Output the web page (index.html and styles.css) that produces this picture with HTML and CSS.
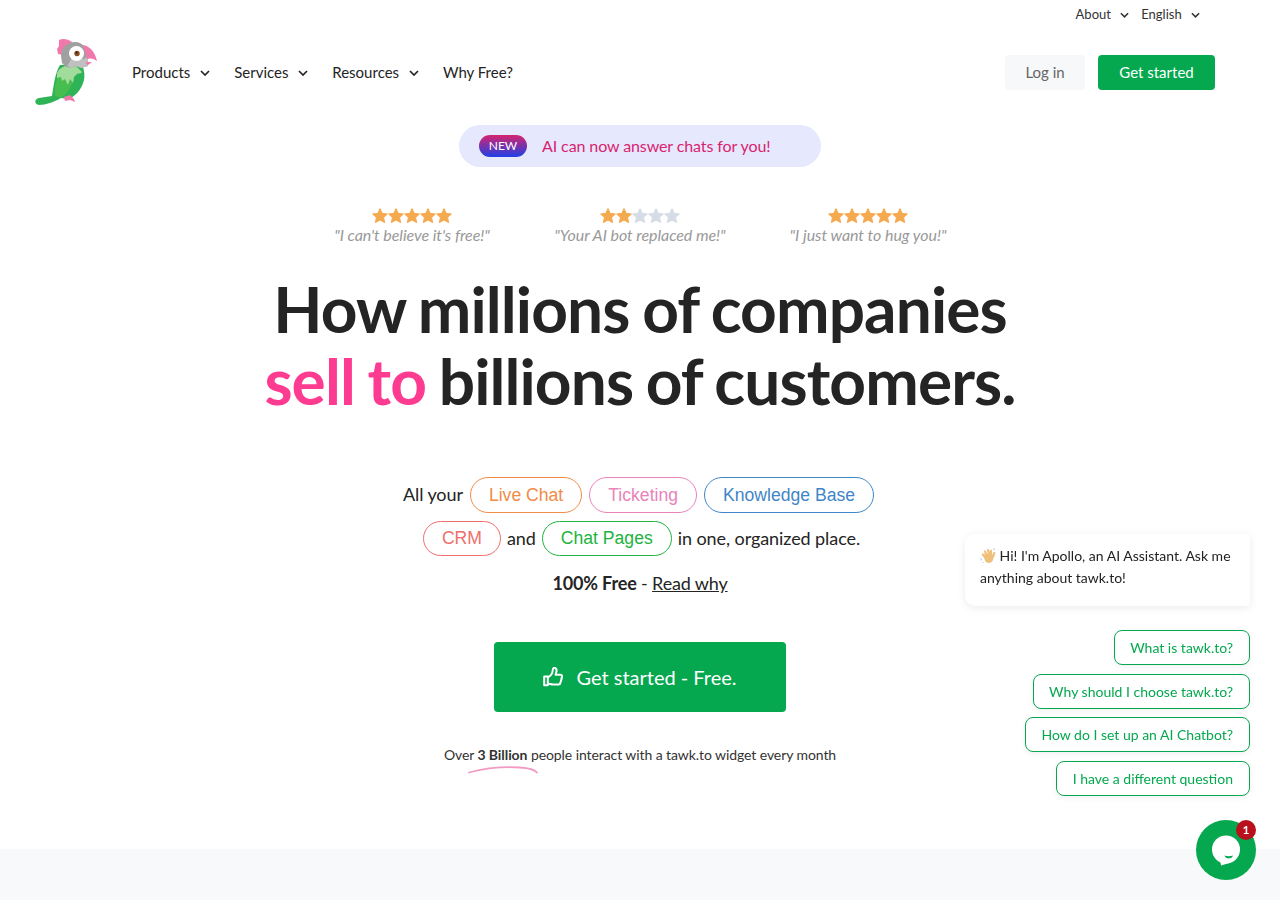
FILE: index.html
```html
<!doctype html>
<html>
<head>
    <meta charset="utf-8">
    <title>tawk.to</title>
    <link rel="stylesheet" href="styles.css">
</head>
<body>
    <svg class="defs" width="0" height="0">
        <symbol id="star" viewBox="0 0 16 16">
            <path d="M8 .6l2.2 4.7 5.2.7-3.8 3.5 1 5.1L8 12.1l-4.6 2.5 1-5.1L.6 6l5.2-.7z" stroke="currentColor" stroke-width="1" stroke-linejoin="round"/>
        </symbol>
        <symbol id="chevron" viewBox="0 0 10 6">
            <path d="M1 1l4 4 4-4" fill="none" stroke="currentColor" stroke-width="1.7"/>
        </symbol>
    </svg>

    <div class="topbar">
        <a href="#">About <svg class="chev-small"><use href="#chevron"/></svg></a>
        <a href="#">English <svg class="chev-small"><use href="#chevron"/></svg></a>
    </div>

    <header class="header">
        <svg class="logo" viewBox="9 8 64 68">
            <path d="M14 68L27 66C29 54 30 43 35 35L56 34C59 38 60 44 59 50 57 59 50 67 43 69L36 68C29 72 21 75 14 75 9 74 9 69 14 68Z" fill="#2eb356"/>
            <path d="M34 42C31 50 29 58 30 66L36 68C43 63 48 56 48 47Z" fill="#45bd4f"/>
            <path d="M39 67l6-2 4 4 1 3-5-2-5 1z" fill="#f178ab"/>
            <path d="M32 43C35 36 44 34 51 36L57 42C55 45 53 42 51 45L49 47 48 53 45 49 43 55 40 49 37 51 36 47 32 48Z" fill="#a1dc9c"/>
            <path d="M34 10C38 8 43 9 47 12L44 22 38 25 33 24 32 19 34 16Z" fill="#f178ab"/>
            <path d="M36 26C36 17 43 12 50 12 58 12 63 19 63 27L63 36 56 38 51 36 46 38 41 37 37 33Z" fill="#a0a0a0"/>
            <path d="M63 26L63 36 56 38 51 36 46 38 42 36C45 33 45 27 50 28 54 30 60 30 63 26Z" fill="#c0c0c0"/>
            <path d="M58 15C65 16 70 22 72 31 68 28 65 28 62 29Z" fill="#f178ab"/>
            <path d="M61 32L67 32 63 35 61 34Z" fill="#f178ab"/>
            <circle cx="51.500" cy="23.500" r="7.500" fill="#fff"/>
            <circle cx="52" cy="23.500" r="2.700" fill="#8a4a1c"/>
            <circle cx="51.500" cy="22.500" r=".9" fill="#222"/>
        </svg>
        <nav class="nav">
            <a href="#">Products <svg class="chev"><use href="#chevron"/></svg></a>
            <a href="#">Services <svg class="chev"><use href="#chevron"/></svg></a>
            <a href="#">Resources <svg class="chev"><use href="#chevron"/></svg></a>
            <a href="#">Why Free?</a>
        </nav>
        <div class="auth">
            <a class="btn btn-login" href="#">Log in</a>
            <a class="btn btn-start" href="#">Get started</a>
        </div>
    </header>

    <main class="hero">
        <a class="banner" href="#"><span class="new">NEW</span> <span class="banner-text">AI can now answer chats for you!</span></a>

        <div class="reviews">
            <div class="review">
                <div class="stars">
                    <svg><use href="#star"/></svg><svg><use href="#star"/></svg><svg><use href="#star"/></svg><svg><use href="#star"/></svg><svg><use href="#star"/></svg>
                </div>
                <p>"I can't believe it's free!"</p>
            </div>
            <div class="review">
                <div class="stars">
                    <svg><use href="#star"/></svg><svg><use href="#star"/></svg><svg class="off"><use href="#star"/></svg><svg class="off"><use href="#star"/></svg><svg class="off"><use href="#star"/></svg>
                </div>
                <p>"Your AI bot replaced me!"</p>
            </div>
            <div class="review">
                <div class="stars">
                    <svg><use href="#star"/></svg><svg><use href="#star"/></svg><svg><use href="#star"/></svg><svg><use href="#star"/></svg><svg><use href="#star"/></svg>
                </div>
                <p>"I just want to hug you!"</p>
            </div>
        </div>

        <h1>How millions of companies<br><span class="pink">sell to</span> billions of customers.</h1>

        <div class="pill-row row-one">
            <span>All your</span>
            <a class="pill orange" href="#">Live Chat</a>
            <a class="pill rose" href="#">Ticketing</a>
            <a class="pill blue" href="#">Knowledge Base</a>
        </div>
        <div class="pill-row row-two">
            <a class="pill red" href="#">CRM</a>
            <span>and</span>
            <a class="pill green" href="#">Chat Pages</a>
            <span>in one, organized place.</span>
        </div>
        <p class="free"><b>100% Free</b> - <a href="#">Read why</a></p>

        <a class="cta" href="#">
            <svg class="thumb" viewBox="0 0 20 20">
                <path d="M1.200 9.500h3.600v8.800H1.200zM5 10c2.500-1 4.500-4 4.700-6.500.1-1.500.3-2.700 1.500-2.700 2 0 2.600 2 2.300 3.700-.2 1.200-.8 2.200-1 3.200h4.800c1.300 0 2 1 1.900 2-.1.700-.5 1.200-.8 1.500.3.600.2 1.500-.4 2 .2.800 0 1.500-.6 2 0 1.300-.9 2.300-2.200 2.300H10c-2 0-3-.8-5-1" fill="none" stroke="currentColor" stroke-width="2" stroke-linejoin="round"/>
            </svg>
            Get started - Free.
        </a>

        <p class="note">Over <b>3 Billion</b> people interact with a tawk.to widget every month</p>
        <svg class="squiggle" viewBox="0 0 70 8">
            <path d="M1 6.500C16 2.500 36 .5 52 1.500 60 2 66 3 69 6.500" fill="none" stroke="#f29bc4" stroke-width="1.800" stroke-linecap="round"/>
        </svg>
    </main>

    <div class="band"></div>

    <aside class="widget">
        <div class="bubble">
            <svg class="wave" viewBox="0 0 16 16">
                <g stroke="#f0bf7c" stroke-width="2.200" stroke-linecap="round" fill="none">
                    <path d="M5 9L2.800 6.500M6.500 7L5 3.500M9 6L8 2M11 6.500L11 2.800M13 8.500L14.300 5"/>
                </g>
                <path d="M3.500 8.500L5 5.500 12 6 14 8.500 12.500 13C11 15.500 7 15.500 5.500 13.500z" fill="#f0bf7c"/>
                <path d="M.8 10l.8 2.500M2.500 14l1 1M13 .6l2 1.400" stroke="#a9c8ec" stroke-width="1" fill="none"/>
            </svg>
            Hi! I'm Apollo, an AI Assistant. Ask me anything about tawk.to!
        </div>
        <a class="choice" href="#">What is tawk.to?</a>
        <a class="choice" href="#">Why should I choose tawk.to?</a>
        <a class="choice" href="#">How do I set up an AI Chatbot?</a>
        <a class="choice" href="#">I have a different question</a>
    </aside>

    <a class="launcher" href="#">
        <svg viewBox="0 0 60 60" width="60" height="60">
            <circle cx="30" cy="29.500" r="14" fill="#fff"/>
            <path d="M24 40L25 45.500 35 42.500z" fill="#fff"/>
            <path d="M28.500 35.500c2.500 .9 6 .9 8.500 0-.6 2-2.200 2.800-4.200 2.800s-3.700-.8-4.300-2.800z" fill="#05a84f"/>
        </svg>
        <span class="badge">1</span>
    </a>
</body>
</html>
```

FILE: styles.css
```css
html {
    background: #fff;
}

body {
    margin: 0;
    font-family: Lato, sans-serif;
    color: #242424;
}

a {
    color: inherit;
    text-decoration: none;
}

.defs {
    position: absolute;
}

.topbar {
    display: flex;
    justify-content: flex-end;
    gap: 12px;
    height: 28px;
    padding-right: 80px;
    font-size: 13px;
    line-height: 28px;
    color: #333;
}

.chev-small {
    width: 9px;
    height: 6px;
    margin-left: 6px;
    vertical-align: 1px;
}

.header {
    display: flex;
    align-items: center;
    height: 68px;
    margin-top: 10px;
    padding: 0 65px 0 34px;
}

.logo {
    width: 64px;
    height: 68px;
}

.nav {
    display: flex;
    gap: 24px;
    margin-left: 34px;
    font-size: 15px;
}

.chev {
    width: 10px;
    height: 6px;
    margin-left: 6px;
    vertical-align: 2px;
}

.auth {
    display: flex;
    gap: 13px;
    margin-left: auto;
}

.btn {
    height: 35px;
    line-height: 35px;
    border-radius: 4px;
    font-size: 15px;
    text-align: center;
}

.btn-login {
    width: 80px;
    background: #f7f8fa;
    color: #666;
}

.btn-start {
    width: 117px;
    background: #05a84f;
    color: #fff;
}

.hero {
    display: flex;
    flex-direction: column;
    align-items: center;
    height: 743px;
}

.banner {
    display: flex;
    align-items: center;
    gap: 15px;
    box-sizing: border-box;
    width: 362px;
    height: 42px;
    margin-top: 19px;
    padding-left: 20px;
    border-radius: 21px;
    background: #e6e8fd;
    color: #d8246f;
    font-size: 16px;
}

.banner-text {
    margin-bottom: 2px;
    letter-spacing: -.1px;
}

.new {
    width: 48px;
    height: 22px;
    border-radius: 11px;
    background: linear-gradient(#d6246e, #1f3fe6);
    color: #fff;
    font-size: 12px;
    line-height: 22px;
    text-align: center;
}

.reviews {
    display: grid;
    grid-template-columns: repeat(3, 228px);
    margin-top: 41px;
    text-align: center;
}

.stars {
    display: flex;
    justify-content: center;
    height: 16px;
}

.stars svg {
    width: 16px;
    height: 16px;
    color: #f4ab4f;
    fill: currentColor;
}

.stars svg.off {
    color: #d6dce6;
}

.review p {
    margin: 1px 0 0;
    font-size: 16px;
    font-style: italic;
    line-height: 20px;
    letter-spacing: -.05px;
    color: #999;
}

h1 {
    margin: 28px 0 0;
    font-size: 64px;
    font-weight: 700;
    line-height: 72px;
    letter-spacing: -.9px;
    word-spacing: -2px;
    text-align: center;
    color: #242424;
}

.pink {
    color: #fc3b91;
}

.pill-row {
    display: flex;
    align-items: center;
    font-size: 18px;
    letter-spacing: -.08px;
}

.pill-row span {
    margin-bottom: 2px;
}

.row-one {
    gap: 7px;
    margin: 60px 3px 0 0;
}

.row-two {
    gap: 6px;
    margin: 8px 0 0 3px;
}

.row-two .pill {
    height: 33px;
    line-height: 33px;
}

.pill {
    height: 34px;
    padding: 0 18px;
    border: 1px solid;
    border-radius: 18px;
    font-family: "Liberation Sans", sans-serif;
    font-size: 17.6px;
    line-height: 34px;
    letter-spacing: 0;
}

.orange {
    color: #f08c48;
}

.rose {
    color: #e884b9;
}

.blue {
    color: #3f86c8;
}

.red {
    color: #ee6f6c;
}

.green {
    color: #22b33f;
}

.free {
    margin: 16px 0 0;
    font-size: 18px;
    line-height: 22px;
    letter-spacing: -.15px;
}

.free a {
    text-decoration: underline;
}

.cta {
    display: flex;
    align-items: center;
    justify-content: center;
    gap: 13px;
    width: 292px;
    height: 70px;
    margin-top: 48px;
    border-radius: 4px;
    background: #05a84f;
    color: #fff;
    font-size: 20px;
}

.thumb {
    width: 20px;
    height: 20px;
}

.note {
    margin: 34px 0 0;
    font-size: 14px;
    line-height: 18px;
    letter-spacing: -.08px;
    color: #333;
}

.squiggle {
    width: 70px;
    height: 8px;
    margin: 2px 274px 0 0;
}

.band {
    height: 51px;
    background: #f8f9fb;
}

/* chat widget floats over the page */
.widget {
    position: fixed;
    right: 30px;
    bottom: 104px;
    display: flex;
    flex-direction: column;
    align-items: flex-end;
    gap: 8.667px;
    width: 285px;
    font-size: 14px;
}

.bubble {
    box-sizing: border-box;
    width: 285px;
    margin-bottom: 15.333px;
    padding: 11px 15px 17px;
    border-radius: 10px 0 4px 10px;
    background: #fff;
    box-shadow: 0 2px 8px rgba(0, 0, 0, .08);
    line-height: 22px;
    color: #222;
}

.wave {
    width: 16px;
    height: 16px;
    vertical-align: -3px;
}

.choice {
    height: 33px;
    padding: 0 16px 0 15.500px;
    border: 1px solid #05a84f;
    border-radius: 8px;
    background: #fff;
    box-shadow: 0 2px 6px rgba(0, 0, 0, .06);
    color: #05a84f;
    line-height: 33px;
}

.launcher {
    position: fixed;
    right: 24px;
    bottom: 20px;
    width: 60px;
    height: 60px;
    border-radius: 50%;
    background: #05a84f;
}

.badge {
    position: absolute;
    top: 0;
    right: 0;
    width: 20px;
    height: 20px;
    border-radius: 50%;
    background: #b8101c;
    color: #fff;
    font-size: 12px;
    font-weight: 700;
    line-height: 20px;
    text-align: center;
}
```
